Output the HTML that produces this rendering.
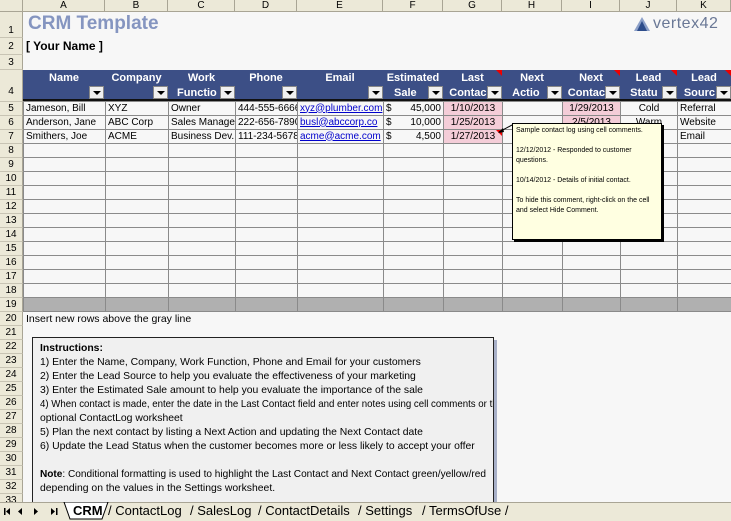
<!DOCTYPE html>
<html><head><style>
*{margin:0;padding:0;box-sizing:border-box}
body{width:731px;height:521px;overflow:hidden;background:#f7f7f7;font-family:"Liberation Sans",sans-serif;font-size:11px;color:#000;position:relative}
.a{position:absolute}
.ch{position:absolute;top:0;height:12px;background:#ece9d8;border-right:1px solid #a9a595;border-bottom:1px solid #a9a595;text-align:center;font-size:10px;line-height:11px}
.rh{position:absolute;left:0;width:23px;background:#ece9d8;border-right:1px solid #a9a595;border-bottom:1px solid #c8c4b4;text-align:center;font-size:10px}
table{border-collapse:collapse;table-layout:fixed;position:absolute;left:23px;top:101px;width:708px}
td{border:1px solid #8a8a8a;height:14px;padding:0 2px;white-space:nowrap;overflow:hidden;font-size:10px;line-height:12px}
.pk{background:#f4cdd8;text-align:center}
.gr td{background:#b0b0b0}
.hd{position:absolute;top:70px;height:31px;background:#3c4f86;color:#fff;font-weight:bold;text-align:center;font-size:11px;line-height:15px;padding-top:1px;border-bottom:2px solid #111;overflow:hidden;white-space:nowrap}
.dd{position:absolute;width:15px;height:13px;background:#f0f0f0;border:1px solid #888;}
.dd:after{content:"";position:absolute;left:3px;top:4px;border-left:4px solid transparent;border-right:4px solid transparent;border-top:4px solid #000}
.tri{position:absolute;width:0;height:0;border-left:6px solid transparent;border-top:6px solid #e00}
.ins{font-size:10.4px;line-height:14px;white-space:nowrap;overflow:hidden}
.sq{display:inline-block;transform-origin:0 0}
.tb{position:absolute;top:503px;font-size:13px}
</style></head><body>
<div class="ch" style="left:0;width:23px"></div>
<div class="ch" style="left:23px;width:82px">A</div>
<div class="ch" style="left:105px;width:63px">B</div>
<div class="ch" style="left:168px;width:67px">C</div>
<div class="ch" style="left:235px;width:62px">D</div>
<div class="ch" style="left:297px;width:86px">E</div>
<div class="ch" style="left:383px;width:60px">F</div>
<div class="ch" style="left:443px;width:59px">G</div>
<div class="ch" style="left:502px;width:60px">H</div>
<div class="ch" style="left:562px;width:58px">I</div>
<div class="ch" style="left:620px;width:57px">J</div>
<div class="ch" style="left:677px;width:54px">K</div>
<div class="rh" style="top:12px;height:26px;line-height:38px">1</div>
<div class="rh" style="top:38px;height:17px;line-height:17px">2</div>
<div class="rh" style="top:55px;height:15px;line-height:15px">3</div>
<div class="rh" style="top:70px;height:32px;line-height:44px">4</div>
<div class="rh" style="top:102px;height:14px;line-height:14px">5</div>
<div class="rh" style="top:116px;height:14px;line-height:14px">6</div>
<div class="rh" style="top:130px;height:14px;line-height:14px">7</div>
<div class="rh" style="top:144px;height:14px;line-height:14px">8</div>
<div class="rh" style="top:158px;height:14px;line-height:14px">9</div>
<div class="rh" style="top:172px;height:14px;line-height:14px">10</div>
<div class="rh" style="top:186px;height:14px;line-height:14px">11</div>
<div class="rh" style="top:200px;height:14px;line-height:14px">12</div>
<div class="rh" style="top:214px;height:14px;line-height:14px">13</div>
<div class="rh" style="top:228px;height:14px;line-height:14px">14</div>
<div class="rh" style="top:242px;height:14px;line-height:14px">15</div>
<div class="rh" style="top:256px;height:14px;line-height:14px">16</div>
<div class="rh" style="top:270px;height:14px;line-height:14px">17</div>
<div class="rh" style="top:284px;height:14px;line-height:14px">18</div>
<div class="rh" style="top:298px;height:14px;line-height:14px">19</div>
<div class="rh" style="top:312px;height:14px;line-height:14px">20</div>
<div class="rh" style="top:326px;height:14px;line-height:14px">21</div>
<div class="rh" style="top:340px;height:14px;line-height:14px">22</div>
<div class="rh" style="top:354px;height:14px;line-height:14px">23</div>
<div class="rh" style="top:368px;height:14px;line-height:14px">24</div>
<div class="rh" style="top:382px;height:14px;line-height:14px">25</div>
<div class="rh" style="top:396px;height:14px;line-height:14px">26</div>
<div class="rh" style="top:410px;height:14px;line-height:14px">27</div>
<div class="rh" style="top:424px;height:14px;line-height:14px">28</div>
<div class="rh" style="top:438px;height:14px;line-height:14px">29</div>
<div class="rh" style="top:452px;height:14px;line-height:14px">30</div>
<div class="rh" style="top:466px;height:14px;line-height:14px">31</div>
<div class="rh" style="top:480px;height:14px;line-height:14px">32</div>
<div class="rh" style="top:494px;height:14px;line-height:14px">33</div>

<div class="a" style="left:28px;top:13px;font-size:19px;font-weight:bold;color:#8595c0">CRM Template</div>
<div class="a" style="left:26px;top:39px;font-size:12px;font-weight:bold">[ Your Name ]</div>
<div class="a" style="left:633px;top:16px;width:18px;height:16px">
<svg width="18" height="16"><polygon points="9,1 17,15 1,15" fill="#8ca0c8"/><polygon points="9,5 14,15 4,15" fill="#2d4c8a"/></svg></div>
<div class="a" style="left:653px;top:15px;font-size:16px;color:#6a7896;letter-spacing:0.5px">vertex42</div>

<div class="hd" style="left:23px;width:82px">Name</div>
<div class="hd" style="left:105px;width:63px">Company</div>
<div class="hd" style="left:168px;width:67px">Work<br>Functio&nbsp;&nbsp;&nbsp;</div>
<div class="hd" style="left:235px;width:62px">Phone</div>
<div class="hd" style="left:297px;width:86px">Email</div>
<div class="hd" style="left:383px;width:60px">Estimated<br>Sale&nbsp;&nbsp;&nbsp;&nbsp;&nbsp;</div>
<div class="hd" style="left:443px;width:59px">Last<br>Contac&nbsp;&nbsp;&nbsp;</div>
<div class="hd" style="left:502px;width:60px">Next<br>Actio&nbsp;&nbsp;&nbsp;&nbsp;</div>
<div class="hd" style="left:562px;width:58px">Next<br>Contac&nbsp;&nbsp;&nbsp;</div>
<div class="hd" style="left:620px;width:57px">Lead<br>Statu&nbsp;&nbsp;&nbsp;</div>
<div class="hd" style="left:677px;width:54px">Lead<br>Sourc&nbsp;&nbsp;&nbsp;</div>
<div class="dd" style="left:89px;top:86px"></div>
<div class="dd" style="left:153px;top:86px"></div>
<div class="dd" style="left:220px;top:86px"></div>
<div class="dd" style="left:282px;top:86px"></div>
<div class="dd" style="left:368px;top:86px"></div>
<div class="dd" style="left:428px;top:86px"></div>
<div class="dd" style="left:487px;top:86px"></div>
<div class="dd" style="left:547px;top:86px"></div>
<div class="dd" style="left:605px;top:86px"></div>
<div class="dd" style="left:662px;top:86px"></div>
<div class="dd" style="left:716px;top:86px"></div>
<div class="tri" style="left:496px;top:70px"></div>
<div class="tri" style="left:614px;top:70px"></div>
<div class="tri" style="left:671px;top:70px"></div>
<div class="tri" style="left:725px;top:70px"></div>

<table>
<colgroup><col style="width:82px"><col style="width:63px"><col style="width:67px"><col style="width:62px"><col style="width:86px"><col style="width:60px"><col style="width:59px"><col style="width:60px"><col style="width:58px"><col style="width:57px"><col style="width:54px"></colgroup>
<tr><td>Jameson, Bill</td><td>XYZ</td><td>Owner</td><td>444-555-6666</td><td style="color:#00c;text-decoration:underline">xyz@plumber.com</td><td>$<span style="float:right">45,000</span></td><td class="pk">1/10/2013</td><td></td><td class="pk">1/29/2013</td><td style="text-align:center">Cold</td><td>Referral</td></tr>
<tr><td>Anderson, Jane</td><td>ABC Corp</td><td>Sales Manager</td><td>222-656-7890</td><td style="color:#00c;text-decoration:underline">busl@abccorp.co</td><td>$<span style="float:right">10,000</span></td><td class="pk">1/25/2013</td><td></td><td class="pk">2/5/2013</td><td style="text-align:center">Warm</td><td>Website</td></tr>
<tr><td>Smithers, Joe</td><td>ACME</td><td>Business Dev.</td><td>111-234-5678</td><td style="color:#00c;text-decoration:underline">acme@acme.com</td><td>$<span style="float:right">4,500</span></td><td class="pk">1/27/2013</td><td></td><td></td><td></td><td>Email</td></tr>
<tr><td></td><td></td><td></td><td></td><td></td><td></td><td></td><td></td><td></td><td></td><td></td></tr>
<tr><td></td><td></td><td></td><td></td><td></td><td></td><td></td><td></td><td></td><td></td><td></td></tr>
<tr><td></td><td></td><td></td><td></td><td></td><td></td><td></td><td></td><td></td><td></td><td></td></tr>
<tr><td></td><td></td><td></td><td></td><td></td><td></td><td></td><td></td><td></td><td></td><td></td></tr>
<tr><td></td><td></td><td></td><td></td><td></td><td></td><td></td><td></td><td></td><td></td><td></td></tr>
<tr><td></td><td></td><td></td><td></td><td></td><td></td><td></td><td></td><td></td><td></td><td></td></tr>
<tr><td></td><td></td><td></td><td></td><td></td><td></td><td></td><td></td><td></td><td></td><td></td></tr>
<tr><td></td><td></td><td></td><td></td><td></td><td></td><td></td><td></td><td></td><td></td><td></td></tr>
<tr><td></td><td></td><td></td><td></td><td></td><td></td><td></td><td></td><td></td><td></td><td></td></tr>
<tr><td></td><td></td><td></td><td></td><td></td><td></td><td></td><td></td><td></td><td></td><td></td></tr>
<tr><td></td><td></td><td></td><td></td><td></td><td></td><td></td><td></td><td></td><td></td><td></td></tr>
<tr class="gr"><td></td><td></td><td></td><td></td><td></td><td></td><td></td><td></td><td></td><td></td><td></td></tr>
</table>
<div class="tri" style="left:496px;top:130px"></div>

<svg class="a" style="left:498px;top:122px" width="16" height="12"><line x1="1" y1="10" x2="14" y2="3" stroke="#000"/><polygon points="0,11 5,6 6,10" fill="#000"/></svg>
<div class="a" style="left:512px;top:123px;width:150px;height:117px;background:#ffffe1;border:1px solid #000;box-shadow:2px 2px 0 #000;font-size:7px;line-height:10px;padding:2px 3px">Sample contact log using cell comments.<br><br>12/12/2012 - Responded to customer questions.<br><br>10/14/2012 - Details of initial contact.<br><br>To hide this comment, right-click on the cell and select Hide Comment.</div>

<div class="a" style="left:26px;top:313px;font-size:10.5px">Insert new rows above the gray line</div>

<div class="a ins" style="left:32px;top:337px;width:462px;height:175px;background:#f0f0f0;border:1px solid #222;box-shadow:3px 3px 0 #a8b0c8;padding:4px 7px">
<b>Instructions:</b><br>
1) Enter the Name, Company, Work Function, Phone and Email for your customers<br>
2) Enter the Lead Source to help you evaluate the effectiveness of your marketing<br>
3) Enter the Estimated Sale amount to help you evaluate the importance of the sale<br>
<span class="sq" style="transform:scaleX(0.93)">4) When contact is made, enter the date in the Last Contact field and enter notes using cell comments or the</span><br>
optional ContactLog worksheet<br>
5) Plan the next contact by listing a Next Action and updating the Next Contact date<br>
6) Update the Lead Status when the customer becomes more or less likely to accept your offer<br><br>
<span class="sq" style="transform:scaleX(0.97)"><b>Note</b>: Conditional formatting is used to highlight the Last Contact and Next Contact green/yellow/red</span><br>depending on the values in the Settings worksheet.
</div>

<div class="a" style="left:0;top:502px;width:731px;height:19px;background:#ece9d8;border-top:1px solid #a9a595"></div>
<svg class="a" style="left:0;top:502px" width="70" height="19">
<rect x="4" y="6" width="1.5" height="7" fill="#000"/><polygon points="6,9.5 10,6 10,13" fill="#000"/>
<polygon points="18,9.5 22,6 22,13" fill="#000"/>
<polygon points="38,9.5 34,6 34,13" fill="#000"/>
<polygon points="55,9.5 51,6 51,13" fill="#000"/><rect x="56" y="6" width="1.5" height="7" fill="#000"/>
</svg>
<svg class="a" style="left:60px;top:502px" width="450" height="19">
<polygon points="4,0 48,0 42,17 10,17" fill="#fff" stroke="#000"/>
</svg>
<div class="tb" style="left:73px;font-weight:bold">CRM</div>
<div class="tb" style="left:108px">/ ContactLog</div>
<div class="tb" style="left:190px">/ SalesLog</div>
<div class="tb" style="left:258px">/ ContactDetails</div>
<div class="tb" style="left:358px">/ Settings</div>
<div class="tb" style="left:422px">/ TermsOfUse /</div>
</body></html>
